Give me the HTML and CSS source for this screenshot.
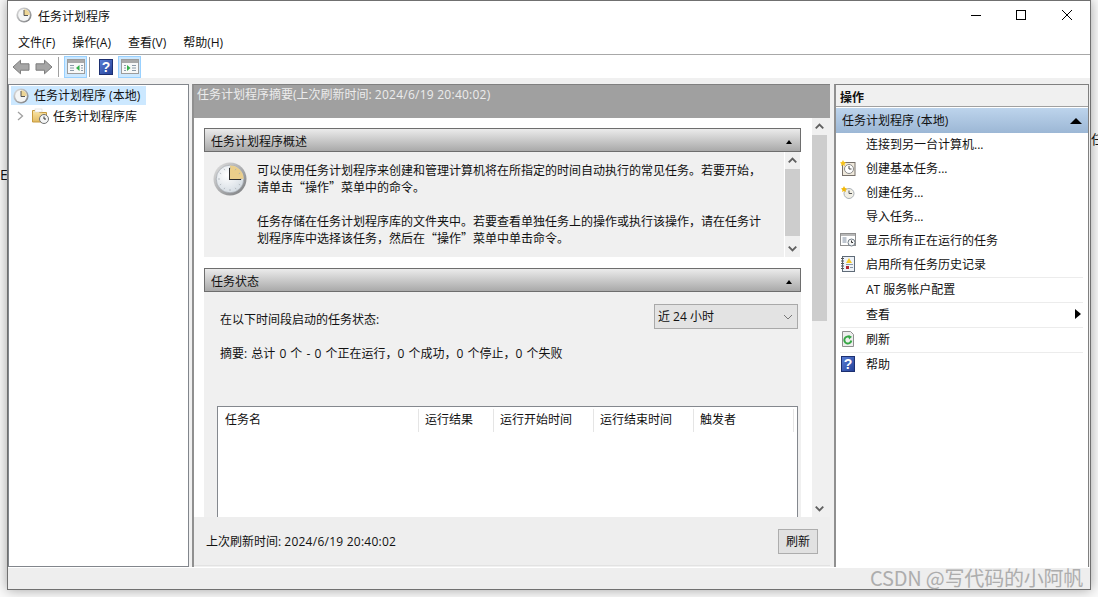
FILE: index.html
```html
<!DOCTYPE html>
<html lang="zh">
<head>
<meta charset="utf-8">
<title>任务计划程序</title>
<link rel="stylesheet" href="styles.css">
</head>
<body>
<svg class="defs" aria-hidden="true">
  <defs>
    <linearGradient id="ring" x1="0" y1="0" x2="1" y2="1"><stop offset="0" stop-color="#e4e4e4"/><stop offset="1" stop-color="#77797c"/></linearGradient>
    <linearGradient id="blue" x1="0" y1="0" x2="1" y2="1"><stop offset="0" stop-color="#5b80d8"/><stop offset="1" stop-color="#233f96"/></linearGradient>
    <linearGradient id="fold" x1="0" y1="0" x2="0" y2="1"><stop offset="0" stop-color="#fbe6a8"/><stop offset="1" stop-color="#e2bb62"/></linearGradient>
    <radialGradient id="face" cx=".4" cy=".35" r=".8"><stop offset="0" stop-color="#ffffff"/><stop offset="1" stop-color="#cdd6de"/></radialGradient>
    <symbol id="clock" viewBox="0 0 16 16">
      <circle cx="8" cy="8" r="7.6" fill="url(#ring)"/>
      <circle cx="8" cy="8" r="5.9" fill="#f4f5f5"/>
      <path d="M8 8V2.200A5.800 5.800 0 0 1 13.800 8Z" fill="#ecd596"/>
      <path d="M8 3V8.500H12" fill="none" stroke="#444" stroke-width=".9"/>
    </symbol>
    <symbol id="clock-big" viewBox="0 0 34 34">
      <circle cx="17" cy="17" r="16.500" fill="url(#ring)"/>
      <circle cx="17" cy="17" r="13.800" fill="url(#face)" stroke="#9aa0a6" stroke-width=".6"/>
      <path d="M17 17V3.400A13.600 13.600 0 0 1 30.600 17Z" fill="#ebcf8b"/>
      <path d="M17 5v2M17 27v2M5 17h2M27 17h2M11 6.800l.8 1.400M23 6.800l-.8 1.400M6.800 11l1.400.8M6.800 23l1.400-.8M27.200 11l-1.400.8M27.200 23l-1.400-.8M11 27.200l.8-1.400M23 27.200l-.8-1.400" stroke="#a9b0b6" stroke-width=".8"/>
      <path d="M16.500 6V18M16 17.500H28" fill="none" stroke="#2e2e2e" stroke-width="1"/>
    </symbol>
    <symbol id="back" viewBox="0 0 18 16">
      <path d="M1 8 8.500 1.200V4.800H17V11.200H8.500V14.800Z" fill="#a6a6a6" stroke="#7d7d7d"/>
    </symbol>
    <symbol id="fwd" viewBox="0 0 18 16">
      <path d="M17 8 9.500 1.200V4.800H1V11.200H9.500V14.800Z" fill="#a6a6a6" stroke="#7d7d7d"/>
    </symbol>
    <symbol id="help" viewBox="0 0 14 16">
      <rect x=".5" y=".5" width="13" height="15" fill="url(#blue)" stroke="#1c2f70"/>
      <text x="7" y="13" text-anchor="middle" font-family="Liberation Sans" font-weight="700" font-size="14" fill="#fff">?</text>
    </symbol>
    <symbol id="pane-left" viewBox="0 0 18 15">
      <rect x=".5" y=".5" width="17" height="14" fill="#f8f8f8" stroke="#9c9c9c"/>
      <rect x="1" y="1" width="16" height="3" fill="#a9a9a9"/>
      <path d="M3 6.500h4M3 9h4M3 11.500h4M14 6.500h2M14 9h2M14 11.500h2" stroke="#8a9aa8"/>
      <path d="M12.500 6 9 9 12.500 12Z" fill="#35b04a"/>
    </symbol>
    <symbol id="pane-right" viewBox="0 0 18 15">
      <rect x=".5" y=".5" width="17" height="14" fill="#f8f8f8" stroke="#9c9c9c"/>
      <rect x="1" y="1" width="16" height="3" fill="#a9a9a9"/>
      <path d="M3 6.500h2M3 9h2M3 11.500h2M11 6.500h4M11 9h4M11 11.500h4" stroke="#8a9aa8"/>
      <path d="M6 6 9.500 9 6 12Z" fill="#35b04a"/>
    </symbol>
    <symbol id="folder" viewBox="0 0 17 16">
      <path d="M.5 2.500H6L7.500 4.500H14.500V14H.5Z" fill="url(#fold)" stroke="#c79a3e"/>
      <rect x="3" y="1" width="7" height="3" fill="#fff" stroke="#cfcfcf" stroke-width=".5"/>
      <circle cx="12" cy="11" r="4.500" fill="#f4f5f5" stroke="#6e7072"/>
      <path d="M12 8.500V11H14" fill="none" stroke="#333"/>
    </symbol>
    <symbol id="basic" viewBox="0 0 16 16">
      <rect x="2.500" y="2.500" width="12.500" height="13" fill="#efe9dc" stroke="#77706a"/>
      <circle cx="9" cy="9" r="4.500" fill="#fff" stroke="#8a8a8a"/>
      <path d="M9 6V9H11.500" fill="none" stroke="#444"/>
      <path d="M3 0 4 2 6 2.500 4.500 4 5 6 3 5 1 6 1.500 4 0 2.500 2 2Z" fill="#f6c21c"/>
    </symbol>
    <symbol id="create" viewBox="0 0 16 16">
      <circle cx="9" cy="9.500" r="5" fill="#f1efe5" stroke="#aab0b6"/>
      <path d="M9 6.500V9.500H12" fill="none" stroke="#555"/>
      <path d="M4 2 5 4 7 4.500 5.500 6 6 8 4 7 2 8 2.500 6 1 4.500 3 4Z" fill="#f2b705"/>
    </symbol>
    <symbol id="running" viewBox="0 0 16 16">
      <rect x=".5" y="1.500" width="15" height="12" fill="#fff" stroke="#8f8f8f"/>
      <rect x="1" y="2" width="14" height="2" fill="#b8b8b8"/>
      <path d="M2.500 6h4M2.500 8h4M2.500 10h4" stroke="#7d8ca0"/>
      <circle cx="11.500" cy="10.500" r="3.500" fill="#f4f5f5" stroke="#6f7a85"/>
      <path d="M11.500 8.500V10.500H13" fill="none" stroke="#333"/>
    </symbol>
    <symbol id="history" viewBox="0 0 16 16">
      <rect x="2.500" y=".5" width="12" height="15" fill="#eef2f7" stroke="#5f6b78"/>
      <path d="M1 2.500h3M1 5h3M1 7.500h3M1 10h3M1 12.500h3" stroke="#555"/>
      <path d="M9 2 12 7H6Z" fill="#f6c928"/>
      <rect x="6" y="10" width="3" height="3" fill="#b3262e"/>
      <path d="M10 11.500h3M6 8.500h7" stroke="#8a97a6"/>
    </symbol>
    <symbol id="refresh" viewBox="0 0 16 16">
      <path d="M2.500.5H10.500L13.500 3.500V15.500H2.500Z" fill="#eeeeee" stroke="#8f8f8f"/>
      <path d="M11.300 9.500A3.500 3.500 0 1 1 10 6.300" fill="none" stroke="#36a644" stroke-width="2"/>
      <path d="M8.500 4 12 5.800 9 8.500Z" fill="#36a644"/>
    </symbol>
  </defs>
</svg>

<span class="stray stray-left">E</span>
<span class="stray stray-right">任</span>

<div class="window">
  <header class="titlebar">
    <svg class="ico-title"><use href="#clock"/></svg>
    <span class="title-text">任务计划程序</span>
    <div class="win-controls">
      <svg class="ctl" viewBox="0 0 45 20"><path d="M16 10.500H26" stroke="#000"/></svg>
      <svg class="ctl" viewBox="0 0 45 20"><rect x="16.500" y="5.500" width="9" height="9" fill="none" stroke="#000"/></svg>
      <svg class="ctl" viewBox="0 0 45 20"><path d="M17 5 27 15M27 5 17 15" stroke="#000" fill="none"/></svg>
    </div>
  </header>

  <nav class="menubar">
    <span>文件(F)</span><span>操作(A)</span><span>查看(V)</span><span>帮助(H)</span>
  </nav>

  <div class="toolbar">
    <svg class="tb-arrow"><use href="#back"/></svg>
    <svg class="tb-arrow tb-fwd"><use href="#fwd"/></svg>
    <i class="tb-sep"></i>
    <span class="tb-btn"><svg class="tb-pane"><use href="#pane-left"/></svg></span>
    <i class="tb-sep tb-sep-b"></i>
    <svg class="tb-help"><use href="#help"/></svg>
    <span class="tb-btn tb-btn-b"><svg class="tb-pane"><use href="#pane-right"/></svg></span>
  </div>

  <main class="panes">
    <aside class="tree">
      <div class="tree-row tree-selected">
        <svg class="ico16"><use href="#clock"/></svg><span class="tree-root">任务计划程序 (本地)</span>
      </div>
      <div class="tree-row tree-child">
        <svg class="chevron" viewBox="0 0 7 10"><path d="M1 1 5.500 5 1 9" fill="none" stroke="#a0a0a0" stroke-width="1.300"/></svg>
        <svg class="ico-folder"><use href="#folder"/></svg><span>任务计划程序库</span>
      </div>
    </aside>

    <section class="center">
      <div class="center-head">任务计划程序摘要(上次刷新时间: <span class="stamp">2024/6/19 20:40:02</span>)</div>
      <div class="scroll-wrap">
        <div class="scroll-content">
          <div class="sec-head"><span>任务计划程序概述</span><i class="tri-up"></i></div>
          <div class="overview">
            <svg class="ico-big"><use href="#clock-big"/></svg>
            <p class="overview-text">可以使用任务计划程序来创建和管理计算机将在所指定的时间自动执行的常见任务。若要开始，<br>请单击“操作”菜单中的命令。<br><br>任务存储在任务计划程序库的文件夹中。若要查看单独任务上的操作或执行该操作，请在任务计<br>划程序库中选择该任务，然后在“操作”菜单中单击命令。</p>
            <div class="sb sb-inner">
              <svg class="sb-arrow" viewBox="0 0 16 18"><path d="M4 11 8 7 12 11" fill="none" stroke="#606060" stroke-width="2"/></svg>
              <div class="sb-track"><div class="sb-thumb sb-thumb-inner"></div></div>
              <svg class="sb-arrow" viewBox="0 0 16 18"><path d="M4 7 8 11 12 7" fill="none" stroke="#606060" stroke-width="2"/></svg>
            </div>
          </div>
          <div class="sec-head sec-head-b"><span>任务状态</span><i class="tri-up"></i></div>
          <div class="status">
            <div class="status-row">
              <span class="status-label">在以下时间段启动的任务状态:</span>
              <div class="select"><span>近 24 小时</span><svg class="select-arrow" viewBox="0 0 10 6"><path d="M1 1 5 5 9 1" fill="none" stroke="#777"/></svg></div>
            </div>
            <p class="summary">摘要: 总计 0 个 - 0 个正在运行，0 个成功，0 个停止，0 个失败</p>
            <div class="table">
              <div class="t-head">
                <span class="col col-a">任务名</span><span class="col col-b">运行结果</span><span class="col col-c">运行开始时间</span><span class="col col-c">运行结束时间</span><span class="col col-c">触发者</span>
              </div>
            </div>
          </div>
        </div>
        <div class="sb sb-outer">
          <svg class="sb-arrow" viewBox="0 0 16 18"><path d="M4 11 8 7 12 11" fill="none" stroke="#606060" stroke-width="2"/></svg>
          <div class="sb-track"><div class="sb-thumb sb-thumb-outer"></div></div>
          <svg class="sb-arrow" viewBox="0 0 16 18"><path d="M4 7 8 11 12 7" fill="none" stroke="#606060" stroke-width="2"/></svg>
        </div>
      </div>
      <div class="center-foot">
        <span>上次刷新时间: <span class="stamp">2024/6/19 20:40:02</span></span>
        <span class="btn">刷新</span>
      </div>
    </section>

    <aside class="actions">
      <div class="act-head">操作</div>
      <div class="act-section"><span>任务计划程序 (本地)</span><i class="tri-up tri-big"></i></div>
      <ul class="act-list">
        <li class="act"><span>连接到另一台计算机...</span></li>
        <li class="act"><svg class="ico16"><use href="#basic"/></svg><span>创建基本任务...</span></li>
        <li class="act"><svg class="ico16"><use href="#create"/></svg><span>创建任务...</span></li>
        <li class="act"><span>导入任务...</span></li>
        <li class="act"><svg class="ico16"><use href="#running"/></svg><span>显示所有正在运行的任务</span></li>
        <li class="act"><svg class="ico16"><use href="#history"/></svg><span>启用所有任务历史记录</span></li>
        <li class="act act-sep"><span>AT 服务帐户配置</span></li>
        <li class="act act-sep"><span>查看</span><i class="tri-right"></i></li>
        <li class="act act-sep"><svg class="ico16"><use href="#refresh"/></svg><span>刷新</span></li>
        <li class="act act-sep"><svg class="ico16"><use href="#help"/></svg><span>帮助</span></li>
      </ul>
    </aside>
  </main>

  <footer class="statusbar"></footer>
</div>

<div class="watermark">CSDN @写代码的小阿帆</div>
</body>
</html>
```

FILE: styles.css
```css
* { box-sizing: border-box; }
html, body { margin: 0; padding: 0; }
body {
  position: relative;
  width: 1098px;
  height: 597px;
  overflow: hidden;
  background: #fafafa;
  color: #111;
  font: 12px/17px "Open Sans", "Noto Sans CJK SC", sans-serif;
}
ul, p { margin: 0; padding: 0; list-style: none; }
i { display: block; font-style: normal; }
.defs { position: absolute; width: 0; height: 0; }
.stamp { letter-spacing: .25px; }

.stray { position: absolute; color: #111; font-size: 14px; line-height: 16px; }
.stray-left { left: 0; top: 167px; }
.stray-right { left: 1091px; top: 131px; font-family: "Noto Sans CJK SC", sans-serif; font-size: 13px; }

.window {
  position: relative;
  display: flex;
  flex-direction: column;
  width: 1084px;
  height: 590px;
  margin-left: 7px;
  background: #f0f0f0;
  border: 1px solid #707070;
  box-shadow: 0 0 12px rgba(0, 0, 0, .35);
}

.titlebar {
  display: flex;
  align-items: center;
  flex: 0 0 30px;
  padding: 0 0 2px 8px;
  background: #fff;
}
.ico-title { width: 16px; height: 16px; }
.title-text { margin: 2px 0 0 6px; }
.win-controls { display: flex; margin-left: auto; }
.ctl { width: 45px; height: 20px; }

.menubar {
  display: flex;
  align-items: center;
  gap: 17px;
  flex: 0 0 24px;
  padding: 0 0 0 10px;
  background: #fff;
  border-bottom: 1px solid #a8a8a8;
}

.toolbar {
  display: flex;
  align-items: center;
  flex: 0 0 23px;
  padding-left: 4px;
  background: #fff;
}
.tb-arrow { width: 18px; height: 16px; }
.tb-fwd { margin-left: 5px; }
.tb-sep { width: 1px; height: 20px; margin: 0 5px 0 5px; background: #a0a0a0; }
.tb-sep-b { margin: 0 9px 0 2px; }
.tb-btn {
  display: flex;
  align-items: center;
  justify-content: center;
  width: 23px;
  height: 22px;
  background: #cce8ff;
  border: 1px solid #99d1ff;
}
.tb-btn-b { margin-left: 5px; }
.tb-pane { width: 18px; height: 15px; }
.tb-help { width: 14px; height: 16px; }

.panes {
  display: flex;
  flex: 0 0 483px;
  margin-top: 6px;
}
.tree {
  flex: 0 0 181px;
  padding: 1px 2px;
  background: #fff;
  border: 1px solid #82868c;
}
.tree-row { display: flex; align-items: center; height: 19px; }
.tree-selected { width: 135px; padding-left: 2px; background: #cce8ff; }
.tree-root { margin-left: 5px; }
.ico16 { flex: none; width: 16px; height: 16px; }
.tree-child { height: 20px; margin-top: 1px; padding-left: 6px; }
.chevron { width: 7px; height: 10px; }
.ico-folder { width: 17px; height: 16px; margin-left: 8px; margin-right: 4px; }

.center {
  display: flex;
  flex-direction: column;
  flex: 0 0 638px;
  margin-left: 3px;
  border-top: 1px solid #808080;
  border-left: 2px solid #909090;
}
.center-head {
  flex: 0 0 33px;
  padding: 1px 0 0 3px;
  background: #a0a0a0;
  color: #ececec;
}
.scroll-wrap {
  display: flex;
  flex: 0 0 399px;
  overflow: hidden;
  padding-right: 3px;
}
.scroll-content {
  flex: 0 0 618px;
  height: 399px;
  padding: 10px 11px 0 10px;
  overflow: hidden;
  background: #fff;
}
.sec-head {
  display: flex;
  align-items: center;
  justify-content: space-between;
  height: 24px;
  padding: 3px 8px 0 6px;
  background: linear-gradient(#ebebeb, #a9a9a9);
  border: 1px solid #6e6e6e;
}
.sec-head-b { margin-top: 11px; }
.tri-up {
  width: 0;
  height: 0;
  border: 3.500px solid transparent;
  border-top: 0;
  border-bottom: 4px solid #000;
}
.overview {
  display: flex;
  height: 105px;
  padding-left: 9px;
  background: #f0f0f0;
}
.ico-big { flex: none; width: 34px; height: 34px; margin-top: 10px; }
.overview-text {
  flex: 1;
  margin: 9px 0 0 10px;
  color: #111;
  font-family: "Noto Sans CJK SC", sans-serif;
}
.sb { display: flex; flex-direction: column; background: #f0f0f0; }
.sb-inner { flex: 0 0 17px; height: 105px; border-left: 1px solid #fff; border-right: 1px solid #fff; }
.sb-outer { flex: 0 0 15px; height: 399px; }
.sb-arrow { flex: none; width: 15px; height: 17px; }
.sb-track { flex: 1; }
.sb-thumb { background: #cdcdcd; }
.sb-thumb-inner { height: 67px; }
.sb-thumb-outer { height: 186px; }
.status { height: 300px; padding: 12px 3px 0 16px; background: #f0f0f0; }
.status-row { display: flex; align-items: center; justify-content: space-between; height: 25px; padding-top: 3px; }
.status-label { margin-top: 2px; }
.select {
  display: flex;
  align-items: center;
  justify-content: space-between;
  width: 144px;
  height: 25px;
  margin-top: -3px;
  padding: 0 4px 0 3px;
  background: #e3e3e3;
  border: 1px solid #a9a9a9;
}
.select-arrow { width: 10px; height: 6px; }
.summary { margin-top: 16px; word-spacing: 1px; }
.table {
  height: 180px;
  margin: 44px 0 0 -3px;
  background: #fff;
  border: 1px solid #84888e;
}
.t-head { display: flex; height: 25px; padding-top: 2px; }
.col { padding: 2px 0 0 6px; border-right: 1px solid #e5e5e5; }
.col-a { flex: 0 0 201px; padding-left: 7px; }
.col-b { flex: 0 0 75px; }
.col-c { flex: 0 0 100px; }

.center-foot {
  display: flex;
  align-items: center;
  justify-content: space-between;
  flex: 0 0 49px;
  padding: 0 12px 0 12px;
  background: #eee;
  border-bottom: 1px solid #e2e2e2;
}
.btn {
  width: 40px;
  height: 25px;
  line-height: 23px;
  text-align: center;
  background: #e1e1e1;
  border: 1px solid #adadad;
}

.actions {
  flex: 0 0 255px;
  margin-left: 4px;
  background: #fff;
  border-top: 1px solid #808080;
  border-left: 2px solid #909090;
  border-right: 1px solid #808080;
}
.act-head {
  height: 22px;
  padding: 4px 0 0 4px;
  font-weight: 700;
  background: #f0f0f0;
  border-bottom: 1px solid #a0a0a0;
}
.act-section {
  display: flex;
  align-items: center;
  justify-content: space-between;
  height: 25px;
  margin-top: 1px;
  padding: 0 6px 0 6px;
  background: linear-gradient(#bdd4ec, #9cb7d5);
}
.tri-big { border-width: 6px; border-top: 0; border-bottom: 6px solid #000; }
.act-list { padding: 0 5px 0 4px; }
.act { display: flex; align-items: center; height: 24px; padding: 0 0 2px 26px; }
.act .ico16 { margin-left: -26px; margin-right: 10px; }
.act-sep { height: 25px; border-top: 1px solid #ececec; }
.tri-right {
  margin-left: auto;
  margin-right: 2px;
  border: 5px solid transparent;
  border-right: 0;
  border-left: 6px solid #000;
}

.statusbar { flex: 1; background: #eee; border-top: 1px solid #fff; }

.watermark {
  position: absolute;
  left: 870px;
  top: 566px;
  color: #adadad;
  font-family: "Noto Sans CJK SC", sans-serif;
  font-size: 20px;
  line-height: 24px;
  letter-spacing: -.2px;
}
```
